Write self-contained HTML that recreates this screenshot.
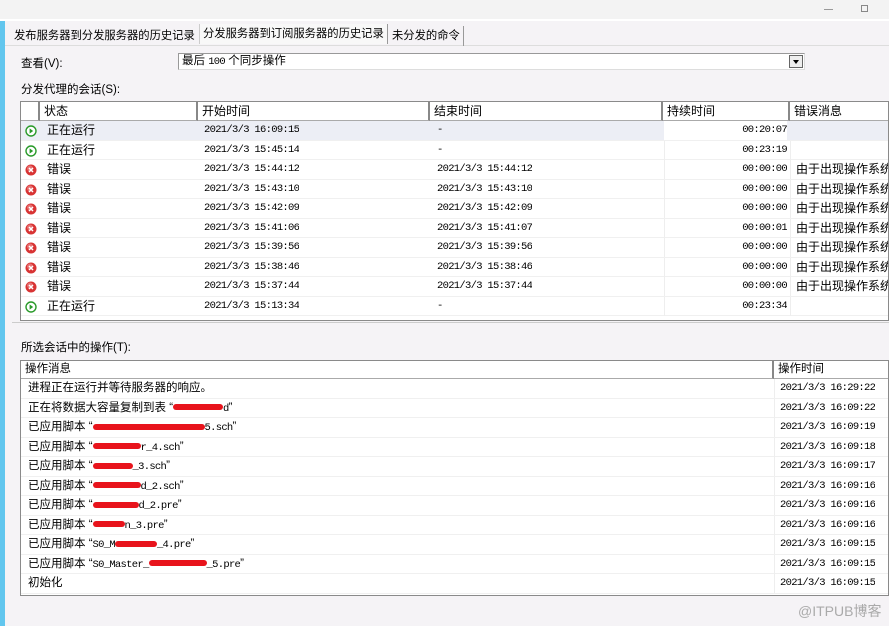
<!DOCTYPE html>
<html><head><meta charset="utf-8"><style>
*{margin:0;padding:0;box-sizing:border-box}
body{width:889px;height:626px;overflow:hidden;background:#f5f3f6;font-family:"Liberation Sans","Noto Sans CJK SC",sans-serif;font-size:12px;color:#000;position:relative}
.abs{position:absolute}
.topbar{left:0;top:0;width:889px;height:21px;background:#f3f3f3;border-bottom:2px solid #fff}
.blue{left:0;top:21px;width:5px;height:605px;background:#62c6ee}
.tab{top:26px;height:20px;line-height:20px;padding:0 3px;font-size:11.3px;border-right:1px solid #999;white-space:nowrap}
.m{font-family:"Liberation Mono",monospace;font-size:10.5px;letter-spacing:-0.7px}
.grid{background:#fff;border:1px solid #8a8a8a;overflow:hidden}
.hdr{position:absolute;top:0;height:19px;line-height:18px;padding-left:4px;background:#fff;border-right:2px solid #888;border-bottom:1px solid #aaa;white-space:nowrap}
.row{position:absolute;left:0;height:19.5px;border-bottom:1px solid #f0f0f0;width:100%}
.c{position:absolute;top:0;height:19px;line-height:19px;white-space:nowrap;overflow:hidden}
.ico{position:absolute;left:4px;top:4px;width:12px;height:12px}
.red{display:inline-block;height:6px;background:#e8141c;border-radius:3px;vertical-align:middle}
.v{position:absolute;top:0;width:1px;height:19px;background:#eee}
</style></head><body>
<div class="abs topbar"></div>
<div class="abs" style="left:824px;top:9px;width:9px;height:1px;background:#999"></div>
<div class="abs" style="left:861px;top:5px;width:7px;height:7px;border:1px solid #888"></div>
<div class="abs blue"></div>
<div class="abs" style="left:5px;top:45px;width:884px;height:1px;background:#ddd"></div>
<div class="abs tab" style="left:11px;border-right:none">发布服务器到分发服务器的历史记录</div>
<div class="abs tab" style="left:199px;top:24px;background:#f8f8f8;border-left:1px solid #ccc">分发服务器到订阅服务器的历史记录</div>
<div class="abs tab" style="left:389px">未分发的命令</div>
<div class="abs" style="left:21px;top:55px;font-size:11.5px">查看(V):</div>
<div class="abs" style="left:178px;top:53px;width:627px;height:17px;background:#fff;border:1px solid #999;border-right-color:#ddd;border-bottom-color:#ddd;line-height:15px;padding-left:3px;font-size:11.5px">最后 <span class="m">100</span> 个同步操作
<div class="abs" style="right:1px;top:1px;width:14px;height:13px;border:1px solid #666;background:#eee"><div class="abs" style="left:3px;top:4px;border-top:4px solid #000;border-left:3.5px solid transparent;border-right:3.5px solid transparent"></div></div></div>
<div class="abs" style="left:21px;top:81px;font-size:11.5px">分发代理的会话(S):</div>

<svg width="0" height="0" style="position:absolute"><defs>
<symbol id="run" viewBox="0 0 12 12"><circle cx="6" cy="6" r="5" fill="#fff" stroke="#2a9a2a" stroke-width="1.4"/><path d="M4.6 3.4L8.2 6L4.6 8.6Z" fill="#2a9a2a"/></symbol>
<symbol id="err" viewBox="0 0 12 12"><circle cx="6" cy="6" r="5.5" fill="#d83434"/><circle cx="5" cy="4.5" r="3" fill="#f39a9a" opacity=".6"/><path d="M4 4L8 8M8 4L4 8" stroke="#fff" stroke-width="1.5"/></symbol>
</defs></svg>

<div class="abs grid" style="left:20px;top:101px;width:869px;height:220px">
<div class="hdr" style="left:0;width:19px"></div>
<div class="hdr" style="left:19px;width:158px">状态</div>
<div class="hdr" style="left:177px;width:232px">开始时间</div>
<div class="hdr" style="left:409px;width:233px">结束时间</div>
<div class="hdr" style="left:642px;width:127px">持续时间</div>
<div class="hdr" style="left:769px;width:110px">错误消息</div>

<div class="row" style="top:19px;background:#eceef5"><svg class="ico"><use href="#run"/></svg><div class="c" style="left:26px">正在运行</div><div class="c m" style="left:183px">2021/3/3 16:09:15</div><div class="c m" style="left:416px">-</div><div class="c m" style="left:643px;width:123px;text-align:right;background:#fff">00:20:07</div></div>
<div class="row" style="top:38.5px"><svg class="ico"><use href="#run"/></svg><div class="c" style="left:26px">正在运行</div><div class="c m" style="left:183px">2021/3/3 15:45:14</div><div class="c m" style="left:416px">-</div><div class="c m" style="left:643px;width:123px;text-align:right">00:23:19</div><div class="v" style="left:643px"></div><div class="v" style="left:769px"></div></div>
<div class="row" style="top:58px"><svg class="ico"><use href="#err"/></svg><div class="c" style="left:26px">错误</div><div class="c m" style="left:183px">2021/3/3 15:44:12</div><div class="c m" style="left:416px">2021/3/3 15:44:12</div><div class="c m" style="left:643px;width:123px;text-align:right">00:00:00</div><div class="c" style="left:775px">由于出现操作系统错误</div><div class="v" style="left:643px"></div><div class="v" style="left:769px"></div></div>
<div class="row" style="top:77.5px"><svg class="ico"><use href="#err"/></svg><div class="c" style="left:26px">错误</div><div class="c m" style="left:183px">2021/3/3 15:43:10</div><div class="c m" style="left:416px">2021/3/3 15:43:10</div><div class="c m" style="left:643px;width:123px;text-align:right">00:00:00</div><div class="c" style="left:775px">由于出现操作系统错误</div><div class="v" style="left:643px"></div><div class="v" style="left:769px"></div></div>
<div class="row" style="top:97px"><svg class="ico"><use href="#err"/></svg><div class="c" style="left:26px">错误</div><div class="c m" style="left:183px">2021/3/3 15:42:09</div><div class="c m" style="left:416px">2021/3/3 15:42:09</div><div class="c m" style="left:643px;width:123px;text-align:right">00:00:00</div><div class="c" style="left:775px">由于出现操作系统错误</div><div class="v" style="left:643px"></div><div class="v" style="left:769px"></div></div>
<div class="row" style="top:116.5px"><svg class="ico"><use href="#err"/></svg><div class="c" style="left:26px">错误</div><div class="c m" style="left:183px">2021/3/3 15:41:06</div><div class="c m" style="left:416px">2021/3/3 15:41:07</div><div class="c m" style="left:643px;width:123px;text-align:right">00:00:01</div><div class="c" style="left:775px">由于出现操作系统错误</div><div class="v" style="left:643px"></div><div class="v" style="left:769px"></div></div>
<div class="row" style="top:136px"><svg class="ico"><use href="#err"/></svg><div class="c" style="left:26px">错误</div><div class="c m" style="left:183px">2021/3/3 15:39:56</div><div class="c m" style="left:416px">2021/3/3 15:39:56</div><div class="c m" style="left:643px;width:123px;text-align:right">00:00:00</div><div class="c" style="left:775px">由于出现操作系统错误</div><div class="v" style="left:643px"></div><div class="v" style="left:769px"></div></div>
<div class="row" style="top:155.5px"><svg class="ico"><use href="#err"/></svg><div class="c" style="left:26px">错误</div><div class="c m" style="left:183px">2021/3/3 15:38:46</div><div class="c m" style="left:416px">2021/3/3 15:38:46</div><div class="c m" style="left:643px;width:123px;text-align:right">00:00:00</div><div class="c" style="left:775px">由于出现操作系统错误</div><div class="v" style="left:643px"></div><div class="v" style="left:769px"></div></div>
<div class="row" style="top:175px"><svg class="ico"><use href="#err"/></svg><div class="c" style="left:26px">错误</div><div class="c m" style="left:183px">2021/3/3 15:37:44</div><div class="c m" style="left:416px">2021/3/3 15:37:44</div><div class="c m" style="left:643px;width:123px;text-align:right">00:00:00</div><div class="c" style="left:775px">由于出现操作系统错误</div><div class="v" style="left:643px"></div><div class="v" style="left:769px"></div></div>
<div class="row" style="top:194.5px"><svg class="ico"><use href="#run"/></svg><div class="c" style="left:26px">正在运行</div><div class="c m" style="left:183px">2021/3/3 15:13:34</div><div class="c m" style="left:416px">-</div><div class="c m" style="left:643px;width:123px;text-align:right">00:23:34</div><div class="v" style="left:643px"></div><div class="v" style="left:769px"></div></div>
</div>

<div class="abs" style="left:12px;top:322px;width:877px;height:1px;background:#ccc"></div>
<div class="abs" style="left:21px;top:339px;font-size:11.5px">所选会话中的操作(T):</div>
<div class="abs grid" style="left:20px;top:360px;width:869px;height:236px;font-size:11.5px">
<div class="hdr" style="left:0;width:753px;height:18px;line-height:17px">操作消息</div>
<div class="hdr" style="left:753px;width:117px;height:18px;line-height:17px">操作时间</div>
<div class="row" style="top:18px"><div class="c" style="left:7px">进程正在运行并等待服务器的响应。</div><div class="c m" style="left:759px">2021/3/3 16:29:22</div><div class="v" style="left:753px"></div></div>
<div class="row" style="top:37.5px"><div class="c" style="left:7px">正在将数据大容量复制到表 “<span class="red" style="width:50px"></span><span class="m">d</span>”</div><div class="c m" style="left:759px">2021/3/3 16:09:22</div><div class="v" style="left:753px"></div></div>
<div class="row" style="top:57px"><div class="c" style="left:7px">已应用脚本 “<span class="red" style="width:112px"></span><span class="m">5.sch</span>”</div><div class="c m" style="left:759px">2021/3/3 16:09:19</div><div class="v" style="left:753px"></div></div>
<div class="row" style="top:76.5px"><div class="c" style="left:7px">已应用脚本 “<span class="red" style="width:48px"></span><span class="m">r_4.sch</span>”</div><div class="c m" style="left:759px">2021/3/3 16:09:18</div><div class="v" style="left:753px"></div></div>
<div class="row" style="top:96px"><div class="c" style="left:7px">已应用脚本 “<span class="red" style="width:40px"></span><span class="m">_3.sch</span>”</div><div class="c m" style="left:759px">2021/3/3 16:09:17</div><div class="v" style="left:753px"></div></div>
<div class="row" style="top:115.5px"><div class="c" style="left:7px">已应用脚本 “<span class="red" style="width:48px"></span><span class="m">d_2.sch</span>”</div><div class="c m" style="left:759px">2021/3/3 16:09:16</div><div class="v" style="left:753px"></div></div>
<div class="row" style="top:135px"><div class="c" style="left:7px">已应用脚本 “<span class="red" style="width:46px"></span><span class="m">d_2.pre</span>”</div><div class="c m" style="left:759px">2021/3/3 16:09:16</div><div class="v" style="left:753px"></div></div>
<div class="row" style="top:154.5px"><div class="c" style="left:7px">已应用脚本 “<span class="red" style="width:32px"></span><span class="m">n_3.pre</span>”</div><div class="c m" style="left:759px">2021/3/3 16:09:16</div><div class="v" style="left:753px"></div></div>
<div class="row" style="top:174px"><div class="c" style="left:7px">已应用脚本 “<span class="m">S0_M</span><span class="red" style="width:42px"></span><span class="m">_4.pre</span>”</div><div class="c m" style="left:759px">2021/3/3 16:09:15</div><div class="v" style="left:753px"></div></div>
<div class="row" style="top:193.5px"><div class="c" style="left:7px">已应用脚本 “<span class="m">S0_Master_</span><span class="red" style="width:58px"></span><span class="m">_5.pre</span>”</div><div class="c m" style="left:759px">2021/3/3 16:09:15</div><div class="v" style="left:753px"></div></div>
<div class="row" style="top:213px"><div class="c" style="left:7px">初始化</div><div class="c m" style="left:759px">2021/3/3 16:09:15</div><div class="v" style="left:753px"></div></div>
</div>
<div class="abs" style="left:798px;top:601px;color:#aaa;font-size:14px">@ITPUB博客</div>
</body></html>
